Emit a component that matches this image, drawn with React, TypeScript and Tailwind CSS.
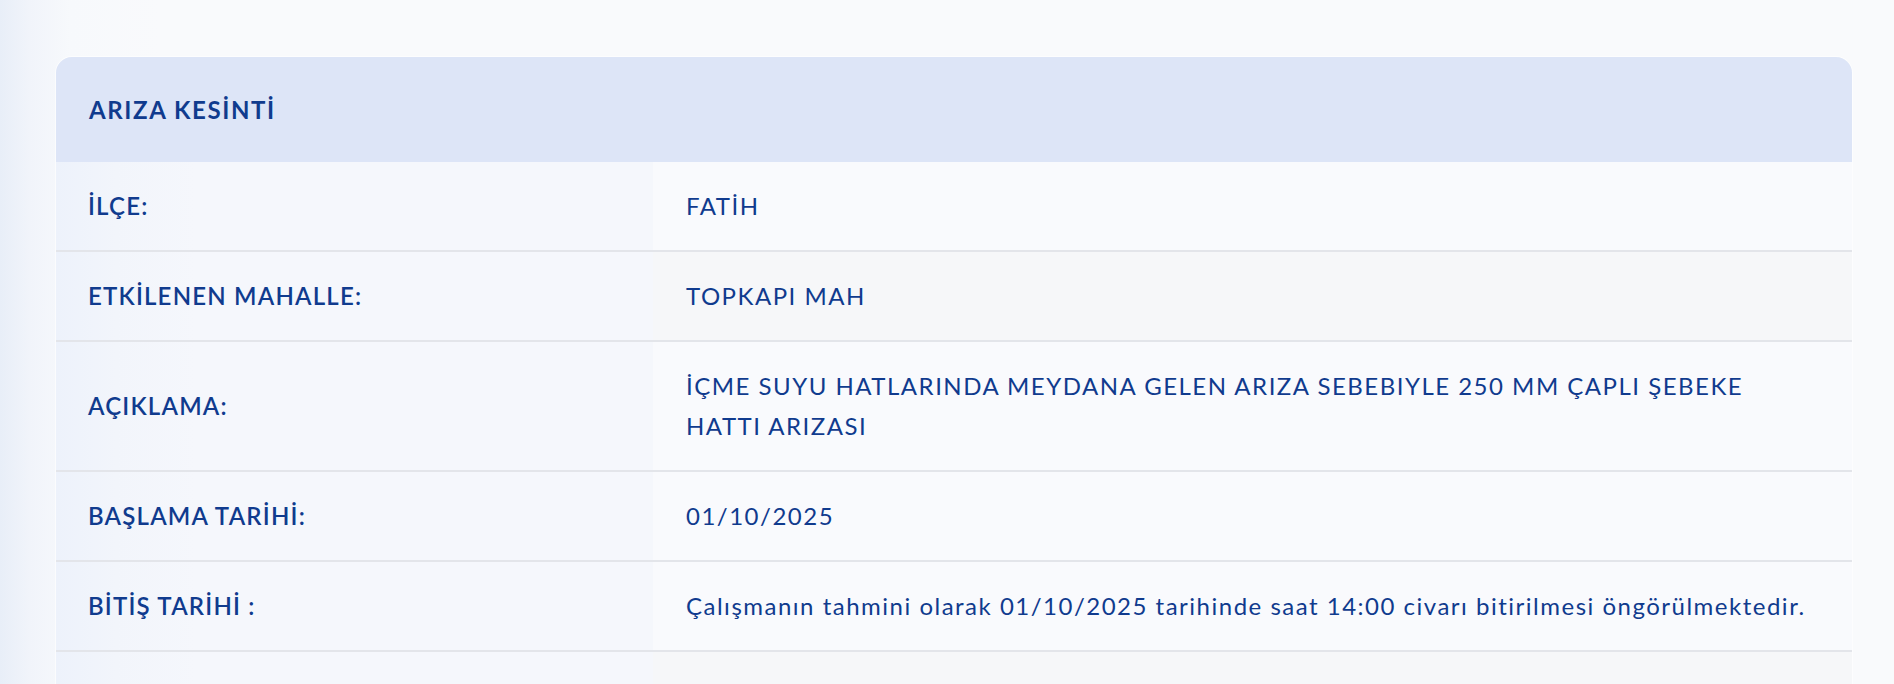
import React from "react";

type Row = { label: string; value: React.ReactNode; stripe?: boolean };

const rows: Row[] = [
  { label: "İLÇE:", value: "FATİH" },
  { label: "ETKİLENEN MAHALLE:", value: "TOPKAPI MAH", stripe: true },
  {
    label: "AÇIKLAMA:",
    value: (
      <>
        İÇME SUYU HATLARINDA MEYDANA GELEN ARIZA SEBEBIYLE 250 MM ÇAPLI ŞEBEKE
        <br />
        HATTI ARIZASI
      </>
    ),
  },
  { label: "BAŞLAMA TARİHİ:", value: "01/10/2025" },
  {
    label: "BİTİŞ TARİHİ :",
    value: "Çalışmanın tahmini olarak 01/10/2025 tarihinde saat 14:00 civarı bitirilmesi öngörülmektedir.",
  },
  { label: "SOKAKLAR:", value: "Etkilenen bölge ve çevresi", stripe: true },
];

export default function App() {
  return (
    <div
      className="min-h-screen w-full overflow-hidden bg-[linear-gradient(90deg,#e8eef8_0px,#f1f4fa_30px,#f7f9fc_70px,#f9fafc_160px)] text-[#103b8e]"
      style={{ fontFamily: "Lato, 'Noto Sans', sans-serif" }}
    >
      <div className="pl-[56px] pr-[42px] pt-[57px]">
        <div className="overflow-hidden rounded-t-[16px] shadow-[0_0_0_1px_rgba(255,255,255,0.6)]">
          <div className="flex h-[105px] items-center bg-[#dde5f7] px-[33px] text-[24px] font-bold tracking-[1.6px]">
            ARIZA KESİNTİ
          </div>
          {rows.map((r, i) => (
            <div key={i} className="grid grid-cols-[597px_1fr] border-b-2 border-[#e3e5ea]">
              <div className="flex items-center bg-[linear-gradient(90deg,#edf2fb_0px,#f2f5fb_60px,#f5f7fc_140px)] py-[24px] pl-[32px] pr-4 text-[24px] font-semibold leading-[40px] tracking-[1.2px]">
                {r.label}
              </div>
              <div
                className={
                  r.stripe
                    ? "flex items-center bg-[#f6f7f9] py-[24px] pl-[33px] pr-6 text-[24px] leading-[40px] tracking-[1.5px]"
                    : "flex items-center bg-[#f9fafd] py-[24px] pl-[33px] pr-6 text-[24px] leading-[40px] tracking-[1.5px]"
                }
              >
                <div className="whitespace-nowrap">{r.value}</div>
              </div>
            </div>
          ))}
        </div>
      </div>
    </div>
  );
}
